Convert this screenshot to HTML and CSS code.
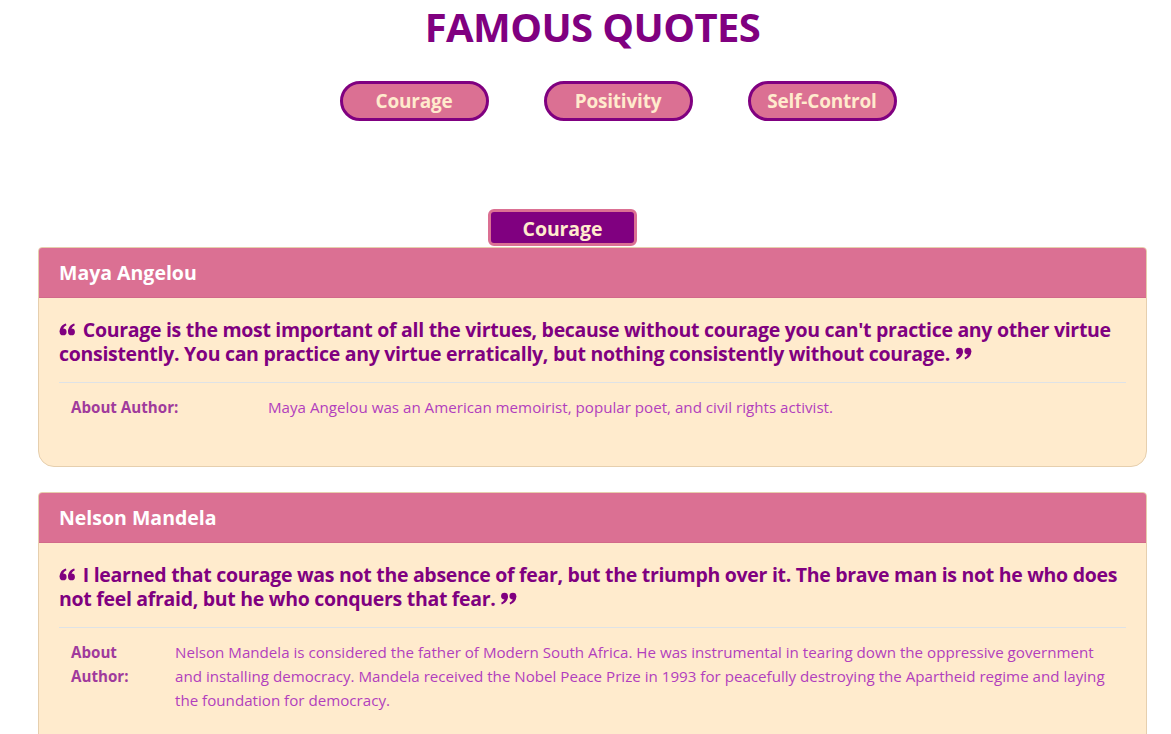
FILE: index.html
```html
<!DOCTYPE html>
<html lang="en">
<head>
<meta charset="utf-8">
<title>Famous Quotes</title>
<link rel="stylesheet" href="styles.css">
</head>
<body>
<div class="page">
  <h1 class="title">FAMOUS QUOTES</h1>
  <nav class="filters">
    <button class="filter-btn">Courage</button>
    <button class="filter-btn">Positivity</button>
    <button class="filter-btn">Self-Control</button>
  </nav>
  <div class="tab-row">
    <div class="tab-label">Courage</div>
  </div>

  <section class="card">
    <header class="card-header">Maya Angelou</header>
    <div class="card-body">
      <blockquote class="quote">
        <svg class="qmark" viewBox="0 0 18 14" aria-hidden="true"><circle cx="4.3" cy="9.6" r="3.7"/><path d="M0.6 9.6 C0.6 5 3 2 7.2 0.6 L7.9 2.4 C5.2 3.6 4 5.6 4 8.4 Z"/><circle cx="13.3" cy="9.6" r="3.7"/><path d="M9.6 9.6 C9.6 5 12 2 16.2 0.6 L16.9 2.4 C14.2 3.6 13 5.6 13 8.4 Z"/></svg>
        Courage is the most important of all the virtues, because without courage you can't practice any other virtue consistently. You can practice any virtue erratically, but nothing consistently without courage.
        <svg class="qmark" viewBox="0 0 18 14" aria-hidden="true"><g transform="rotate(180 9 7)"><circle cx="4.3" cy="9.6" r="3.7"/><path d="M0.6 9.6 C0.6 5 3 2 7.2 0.6 L7.9 2.4 C5.2 3.6 4 5.6 4 8.4 Z"/><circle cx="13.3" cy="9.6" r="3.7"/><path d="M9.6 9.6 C9.6 5 12 2 16.2 0.6 L16.9 2.4 C14.2 3.6 13 5.6 13 8.4 Z"/></g></svg>
      </blockquote>
      <table class="about">
        <tr>
          <td class="about-label about-label-wide">About Author:</td>
          <td class="about-text">Maya Angelou was an American memoirist, popular poet, and civil rights activist.</td>
        </tr>
      </table>
    </div>
  </section>

  <section class="card">
    <header class="card-header">Nelson Mandela</header>
    <div class="card-body">
      <blockquote class="quote">
        <svg class="qmark" viewBox="0 0 18 14" aria-hidden="true"><circle cx="4.3" cy="9.6" r="3.7"/><path d="M0.6 9.6 C0.6 5 3 2 7.2 0.6 L7.9 2.4 C5.2 3.6 4 5.6 4 8.4 Z"/><circle cx="13.3" cy="9.6" r="3.7"/><path d="M9.6 9.6 C9.6 5 12 2 16.2 0.6 L16.9 2.4 C14.2 3.6 13 5.6 13 8.4 Z"/></svg>
        I learned that courage was not the absence of fear, but the triumph over it. The brave man is not he who does not feel afraid, but he who conquers that fear.
        <svg class="qmark" viewBox="0 0 18 14" aria-hidden="true"><g transform="rotate(180 9 7)"><circle cx="4.3" cy="9.6" r="3.7"/><path d="M0.6 9.6 C0.6 5 3 2 7.2 0.6 L7.9 2.4 C5.2 3.6 4 5.6 4 8.4 Z"/><circle cx="13.3" cy="9.6" r="3.7"/><path d="M9.6 9.6 C9.6 5 12 2 16.2 0.6 L16.9 2.4 C14.2 3.6 13 5.6 13 8.4 Z"/></g></svg>
      </blockquote>
      <table class="about">
        <tr>
          <td class="about-label about-label-narrow">About Author:</td>
          <td class="about-text">Nelson Mandela is considered the father of Modern South Africa. He was instrumental in tearing down the oppressive government and installing democracy. Mandela received the Nobel Peace Prize in 1993 for peacefully destroying the Apartheid regime and laying the foundation for democracy.</td>
        </tr>
      </table>
    </div>
  </section>
</div>
</body>
</html>
```

FILE: styles.css
```css
* { box-sizing: border-box; }

body {
  margin: 0;
  background: #ffffff;
  font-family: "Open Sans", "Noto Sans", sans-serif;
  color: #212529;
}

.page {
  padding: 0 24px 0 38px;
}

.title {
  margin: 0;
  text-align: center;
  font-size: 40px;
  line-height: 54px;
  font-weight: 700;
  color: #800080;
  letter-spacing: -0.6px;
}

.filters {
  display: flex;
  justify-content: center;
  gap: 55px;
  padding-left: 51px;
  margin-top: 27px;
}

.filter-btn {
  width: 149px;
  height: 40px;
  border: 3px solid #800080;
  border-radius: 20px;
  background: #db7093;
  color: #ffebcd;
  font-family: inherit;
  font-size: 19px;
  font-weight: 700;
  padding: 0;
  letter-spacing: -0.2px;
}

.tab-row {
  display: flex;
  justify-content: center;
  padding-right: 60px;
  margin-top: 88px;
}

.tab-label {
  width: 149px;
  height: 37px;
  border: 3px solid #db7093;
  border-radius: 6px;
  background: #800080;
  color: #ffebcd;
  font-size: 19.5px;
  font-weight: 700;
  line-height: 34px;
  text-align: center;
  letter-spacing: -0.1px;
}

.card {
  margin-top: 1px;
  margin-bottom: 25px;
  border: 1px solid #e6cfae;
  border-radius: 4px 4px 16px 16px;
  overflow: hidden;
  background: #ffebcd;
}

.card + .card {
  margin-top: 0;
}

.card-header {
  background: #db7093;
  color: #ffffff;
  font-size: 19.5px;
  font-weight: 700;
  line-height: 25px;
  padding: 12px 20px;
  border-bottom: 1px solid #d2698a;
}

.card-body {
  padding: 20px;
}

.quote {
  margin: 0 0 16px;
  color: #800080;
  font-size: 19.5px;
  font-weight: 700;
  line-height: 24px;
  letter-spacing: -0.3px;
}

.qmark {
  width: 17px;
  height: 13px;
  margin-right: 2px;
  fill: #800080;
  vertical-align: 1px;
}

.qmark + * { margin: 0; }

.about {
  width: 100%;
  border-collapse: collapse;
  margin-bottom: 15px;
}

.about td {
  padding: 12px;
  border-top: 1px solid #dee2e6;
  vertical-align: top;
  font-size: 15.15px;
  line-height: 24px;
}

.about-label {
  font-weight: 700;
  color: #a03a9c;
}

.about-label-wide { width: 197px; }
.about-label-narrow { width: 104px; }

.about-text {
  color: #b23ebd;
}
```
